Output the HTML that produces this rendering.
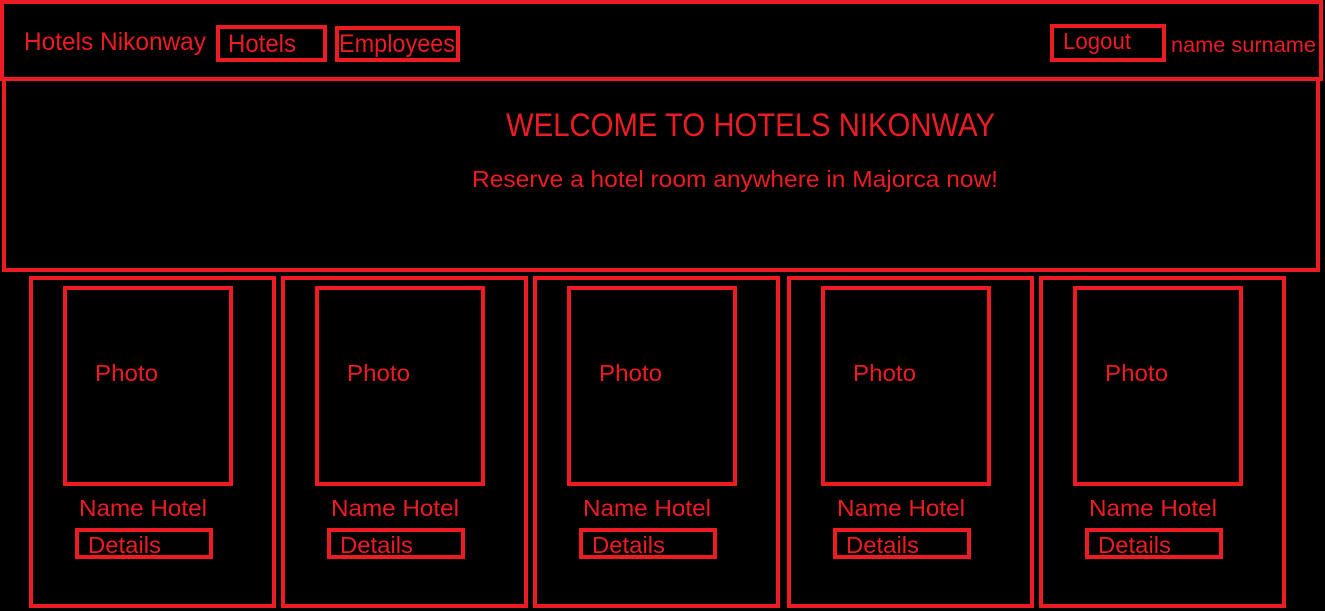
<!DOCTYPE html>
<html><head><meta charset="utf-8"><style>
html,body{margin:0;padding:0;background:#000;width:1325px;height:611px;overflow:hidden}
svg{display:block}
text{font-family:"Liberation Sans",sans-serif;fill:#ed1c24}
</style></head><body>
<svg width="1325" height="611" viewBox="0 0 1325 611" xmlns="http://www.w3.org/2000/svg">
<rect width="1325" height="611" fill="#000"/>
<g fill="none" stroke="#ed1c24" stroke-width="4">
<rect x="2" y="2" width="1319" height="77"/>
<rect x="4" y="79" width="1314" height="191"/>
<rect x="218" y="27" width="107" height="33"/>
<rect x="337" y="28" width="121" height="32"/>
<rect x="1052" y="26" width="112" height="34"/>
</g>
<text x="24" y="50" font-size="25" textLength="182" lengthAdjust="spacingAndGlyphs">Hotels Nikonway</text>
<text x="228" y="52" font-size="25" textLength="68" lengthAdjust="spacingAndGlyphs">Hotels</text>
<text x="339" y="52" font-size="25" textLength="116" lengthAdjust="spacingAndGlyphs">Employees</text>
<text x="1063" y="49" font-size="23" textLength="68" lengthAdjust="spacingAndGlyphs">Logout</text>
<text x="1171" y="52" font-size="21" textLength="145" lengthAdjust="spacingAndGlyphs">name surname</text>
<text x="506" y="136" font-size="32" textLength="489" lengthAdjust="spacingAndGlyphs">WELCOME TO HOTELS NIKONWAY</text>
<text x="472" y="187" font-size="23" textLength="526" lengthAdjust="spacingAndGlyphs">Reserve a hotel room anywhere in Majorca now!</text>
<g id="c">
<g fill="none" stroke="#ed1c24" stroke-width="4">
<rect x="31" y="278" width="243" height="328"/>
<rect x="65" y="288" width="166" height="196"/>
<rect x="77" y="530" width="134" height="27"/>
</g>
<text x="95" y="381" font-size="23" textLength="63" lengthAdjust="spacingAndGlyphs">Photo</text>
<text x="79" y="516" font-size="23" textLength="128" lengthAdjust="spacingAndGlyphs">Name Hotel</text>
<text x="88" y="553" font-size="23" textLength="73" lengthAdjust="spacingAndGlyphs">Details</text>
</g>
<use href="#c" x="252"/>
<use href="#c" x="504"/>
<use href="#c" x="758"/>
<use href="#c" x="1010"/>
</svg>
</body></html>
